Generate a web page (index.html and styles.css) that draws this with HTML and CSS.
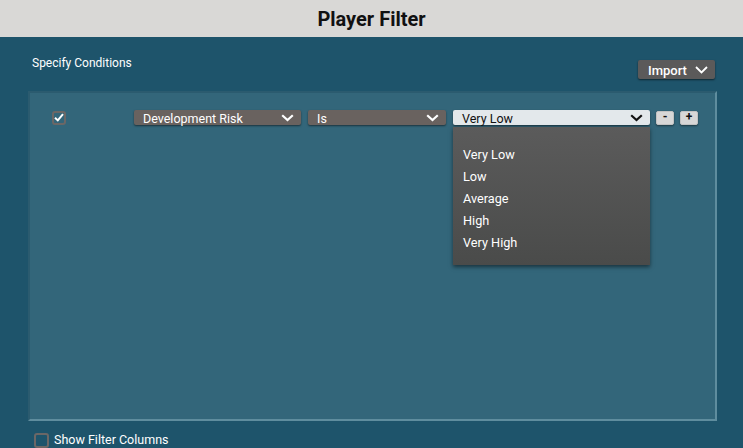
FILE: index.html
```html
<!DOCTYPE html>
<html lang="en">
<head>
    <meta charset="UTF-8">
    <meta name="viewport" content="width=device-width, initial-scale=1.0">
    <title>Player Filter</title>
    <link rel="stylesheet" href="styles.css">
</head>
<body>
    <header class="header">
        <h1 class="title">Player Filter</h1>
    </header>

    <main class="content">
        <div class="toolbar">
            <span class="section-label">Specify Conditions</span>
            <button class="import-btn">
                Import
                <svg class="import-chevron" width="13" height="8" viewBox="0 0 13 8">
                    <path d="M1 1 L6.5 6.5 L12 1" fill="none" stroke="#fff" stroke-width="1.8"/>
                </svg>
            </button>
        </div>

        <section class="panel">
            <div class="condition-row">
                <span class="checkbox checked">
                    <svg width="10" height="9" viewBox="0 0 10 9">
                        <path d="M1 4.8 L3.8 7.4 L9 1.2" fill="none" stroke="#fff" stroke-width="2"/>
                    </svg>
                </span>

                <div class="select select-field">
                    <span>Development Risk</span>
                    <svg class="chevron" width="13" height="8" viewBox="0 0 13 8">
                        <path d="M1.2 1.2 L6.5 6 L11.8 1.2" fill="none" stroke="#fff" stroke-width="2.2"/>
                    </svg>
                </div>

                <div class="select select-op">
                    <span>Is</span>
                    <svg class="chevron" width="13" height="8" viewBox="0 0 13 8">
                        <path d="M1.2 1.2 L6.5 6 L11.8 1.2" fill="none" stroke="#fff" stroke-width="2.2"/>
                    </svg>
                </div>

                <div class="select select-value open">
                    <span>Very Low</span>
                    <svg class="chevron" width="13" height="8" viewBox="0 0 13 8">
                        <path d="M1.2 1.2 L6.5 6 L11.8 1.2" fill="none" stroke="#111" stroke-width="2.2"/>
                    </svg>
                    <ul class="dropdown-list">
                        <li>Very Low</li>
                        <li>Low</li>
                        <li>Average</li>
                        <li>High</li>
                        <li>Very High</li>
                    </ul>
                </div>

                <button class="small-btn">-</button>
                <button class="small-btn">+</button>
            </div>
        </section>

        <label class="footer-option">
            <span class="checkbox"></span>
            Show Filter Columns
        </label>
    </main>
</body>
</html>
```

FILE: styles.css
```css
/* ===== RESET & BASE ===== */
* {
    margin: 0;
    padding: 0;
    box-sizing: border-box;
}

body {
    font-family: 'Roboto', 'Liberation Sans', sans-serif;
    background-color: #1e546b;
    color: #fff;
    font-size: 12.5px;
    height: 448px;
    overflow: hidden;
}

/* ===== HEADER ===== */
.header {
    height: 37px;
    background: #d9d8d6;
    display: flex;
    align-items: center;
    justify-content: center;
}

.title {
    font-size: 20px;
    font-weight: 700;
    color: #111;
    line-height: 1;
    padding-top: 1px;
}

/* ===== CONTENT ===== */
.content {
    padding: 0 26px 0 28px;
}

.toolbar {
    height: 54px;
    display: flex;
    justify-content: space-between;
    align-items: flex-start;
}

.section-label {
    margin-top: 19px;
    padding-left: 4px;
    font-size: 12px;
    line-height: 14px;
}

.import-btn {
    margin-top: 23px;
    margin-right: 2px;
    width: 77px;
    height: 19px;
    display: flex;
    align-items: center;
    gap: 8px;
    padding: 1px 0 0 10px;
    background: #5b5a5a;
    color: #fff;
    border: none;
    border-radius: 2px;
    font-family: inherit;
    font-size: 13px;
    font-weight: 500;
    box-shadow: 0 1px 2px rgba(0, 0, 0, 0.55);
}

/* ===== PANEL ===== */
.panel {
    height: 330px;
    background: #33667a;
    border: 2px solid;
    border-color: #2b5b6f #5f8d9e #5f8d9e #2b5b6f;
    padding: 17px 0 0 22px;
}

.condition-row {
    display: flex;
    align-items: center;
    height: 15px;
}

.checkbox {
    width: 15px;
    height: 15px;
    border: 2px solid #6b6766;
    border-radius: 3px;
    display: flex;
    align-items: center;
    justify-content: center;
    flex-shrink: 0;
}

.condition-row .checkbox {
    width: 14px;
    height: 14px;
}

.select {
    position: relative;
    height: 15px;
    display: flex;
    align-items: center;
    justify-content: space-between;
    padding: 1px 7px 0 9px;
    background: #69625f;
    border-radius: 2px;
    box-shadow: 0 1px 2px rgba(0, 0, 0, 0.5);
    line-height: 15px;
}

.select-field {
    width: 167px;
    margin-left: 68px;
}

.select-op {
    width: 138px;
    margin-left: 7px;
}

.select-value {
    width: 197px;
    margin-left: 7px;
    background: #e3e8eb;
    color: #111;
}

.chevron {
    flex-shrink: 0;
}

/* ===== DROPDOWN LIST ===== */
.dropdown-list {
    position: absolute;
    top: calc(100% + 2px);
    left: 0;
    width: 197px;
    height: 138px;
    list-style: none;
    padding: 17px 0 0 10px;
    background: linear-gradient(#5b5b5b, #4a4b4a);
    box-shadow: 0 2px 4px rgba(0, 0, 0, 0.5);
    color: #fff;
    font-size: 12.7px;
    z-index: 2;
}

.dropdown-list li {
    line-height: 22px;
}

.small-btn {
    width: 18px;
    height: 14px;
    margin-left: 6px;
    background: #d7d7d7;
    border: 1px solid #c2c2c2;
    border-radius: 2px;
    box-shadow: 0 1px 2px rgba(0, 0, 0, 0.45);
    font-family: inherit;
    font-size: 12px;
    font-weight: 700;
    line-height: 11px;
    color: #111;
}

/* ===== FOOTER ===== */
.footer-option {
    margin-top: 11px;
    padding-left: 6px;
    display: flex;
    align-items: center;
    gap: 5px;
    line-height: 16px;
}
```
